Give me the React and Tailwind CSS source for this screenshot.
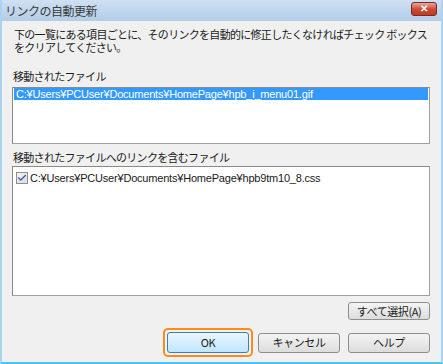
import { Check } from "lucide-react";

const jp = {
  fontFamily: '"Noto Sans CJK JP", "Liberation Sans", sans-serif',
};
const latin = {
  fontFamily: '"Liberation Sans", "Noto Sans CJK JP", sans-serif',
};

function WinButton({ children, focused, className = "" }) {
  const btn = (
    <button
      type="button"
      className={`flex w-[82px] items-center justify-center rounded-[3px] border text-[11px] leading-none tracking-[-0.4px] text-[#1a1a1a] ${
        focused
          ? "h-[21px] border-[#3c7fb1] bg-gradient-to-b from-[#eaf6fd] to-[#bee6fd]"
          : "border-[#8e8e8e] bg-gradient-to-b from-[#f4f4f4] to-[#dddddd]"
      } ${className}`}
    >
      {children}
    </button>
  );
  if (!focused) return btn;
  return (
    <div className="rounded-[5px] border-2 border-[#ff8c1a] p-[2px]">{btn}</div>
  );
}

export default function App() {
  return (
    <div
      className="flex h-[364px] w-[443px] flex-col overflow-hidden border-x-2 border-b-2 border-[#a9d3f0] border-b-[#4fc3ef] bg-[#f0f0f0]"
      style={jp}
    >
      {/* title bar */}
      <div className="-mx-[2px] flex h-[21px] shrink-0 items-center justify-between bg-gradient-to-b from-[#cfe0f2] to-[#b3cde8] pl-[5px] pr-[6px]">
        <span className="text-[12px] leading-[16px] tracking-[-0.5px] text-[#3a3a3a]">
          リンクの自動更新
        </span>
        <div className="mb-[3px] flex h-[14px] w-[26px] items-center justify-center rounded-[3px] border border-[#7a2a22] bg-gradient-to-b from-[#e8a899] via-[#cc4b34] to-[#c03a22]">
          <span className="text-[10px] font-bold leading-none text-white" style={latin}>
            ✕
          </span>
        </div>
      </div>

      {/* body */}
      <div className="flex flex-1 flex-col px-[10px] text-[11px] leading-[12px] tracking-[-0.7px] text-[#1a1a1a]">
        <p className="mt-[7px] h-[27px] whitespace-nowrap pl-[2px] leading-[13px]">
          下の一覧にある項目ごとに、そのリンクを自動的に修正したくなければチェック&nbsp;ボックス
          <br />
          をクリアしてください。
        </p>

        <div className="mt-[15px] h-[12px] whitespace-nowrap pl-[1px]">移動されたファイル</div>
        <div className="mt-[5px] h-[57px] w-[418px] shrink-0 border border-[#a0a0a0] border-l-[#8a8a8a] border-t-[#8a8a8a] bg-white px-[1px]">
          <div
            className="flex h-[12px] items-center whitespace-nowrap bg-[#3399ff] pl-[2px] text-[11px] leading-none tracking-[-0.2px] text-white"
            style={latin}
          >
            C:¥Users¥PCUser¥Documents¥HomePage¥hpb_i_menu01.gif
          </div>
        </div>

        <div className="mt-[7px] h-[12px] whitespace-nowrap pl-[1px]">
          移動されたファイルへのリンクを含むファイル
        </div>
        <div className="mt-[3px] h-[130px] w-[418px] shrink-0 border border-[#a0a0a0] border-l-[#8a8a8a] border-t-[#8a8a8a] bg-white pl-[3px] pt-[5px]">
          <div className="flex items-center gap-[2px]">
            <div className="flex h-[12px] w-[12px] shrink-0 items-center justify-center border border-[#8e8f8f] bg-gradient-to-br from-[#f4f4f4] to-[#dcdcdc]">
              <Check size={10} strokeWidth={3} className="text-[#2f4ea8]" />
            </div>
            <span
              className="whitespace-nowrap text-[11px] leading-none tracking-[-0.2px]"
              style={latin}
            >
              C:¥Users¥PCUser¥Documents¥HomePage¥hpb9tm10_8.css
            </span>
          </div>
        </div>

        <div className="mt-[6px] flex justify-end pr-[1px]">
          <WinButton className="h-[18px]">すべて選択(A)</WinButton>
        </div>

        <div className="mt-[8px] flex items-center justify-end pr-[1px]">
          <WinButton focused>OK</WinButton>
          <WinButton className="ml-[5px] h-[20px]">キャンセル</WinButton>
          <WinButton className="ml-[8px] h-[20px]">ヘルプ</WinButton>
        </div>
      </div>
    </div>
  );
}
